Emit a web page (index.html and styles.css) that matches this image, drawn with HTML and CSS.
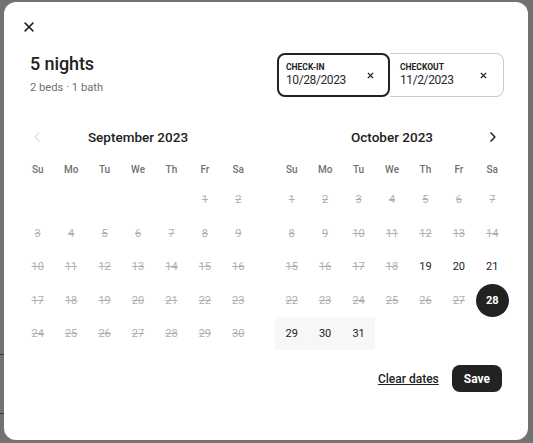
FILE: index.html
```html
<!DOCTYPE html>
<html lang="en">
<head>
<meta charset="utf-8">
<title>Select dates</title>
<link rel="stylesheet" href="styles.css">
</head>
<body>
<div class="modal">
  <div class="topbar">
    <button class="close" aria-label="Close">
      <svg viewBox="0 0 32 32" width="14" height="14"><path d="m6 6 20 20M26 6 6 26" fill="none" stroke="#222" stroke-width="3.4"/></svg>
    </button>
  </div>
  <div class="header">
    <div class="title-block">
      <h1 class="title">5 nights</h1>
      <div class="subtitle">2 beds · 1 bath</div>
    </div>
    <div class="dates">
      <div class="date-field selected">
        <div class="field-text">
          <div class="label">CHECK-IN</div>
          <div class="value">10/28/2023</div>
        </div>
        <svg class="field-x" viewBox="0 0 8 8" width="7" height="7"><path d="M1 1 7 7M7 1 1 7" fill="none" stroke="#222" stroke-width="1.6"/></svg>
      </div>
      <div class="date-field plain">
        <div class="field-text">
          <div class="label">CHECKOUT</div>
          <div class="value">11/2/2023</div>
        </div>
        <svg class="field-x" viewBox="0 0 8 8" width="7" height="7"><path d="M1 1 7 7M7 1 1 7" fill="none" stroke="#222" stroke-width="1.6"/></svg>
      </div>
    </div>
  </div>

  <div class="calendars">
    <div class="month">
      <div class="month-head">
        <span class="nav"><svg viewBox="0 0 32 32" width="12" height="12"><path d="M20 28 8.7 16.7a1 1 0 0 1 0-1.4L20 4" fill="none" stroke="#e2e2e2" stroke-width="4"/></svg></span>
        <span class="month-title">September 2023</span>
        <span class="nav"></span>
      </div>
      <div class="weekdays"><span>Su</span><span>Mo</span><span>Tu</span><span>We</span><span>Th</span><span>Fr</span><span>Sa</span></div>
      <div class="days">
        <span></span><span></span><span></span><span></span><span></span>
        <span class="day off">1</span><span class="day off">2</span>
        <span class="day off">3</span><span class="day off">4</span><span class="day off">5</span><span class="day off">6</span><span class="day off">7</span><span class="day off">8</span><span class="day off">9</span>
        <span class="day off">10</span><span class="day off">11</span><span class="day off">12</span><span class="day off">13</span><span class="day off">14</span><span class="day off">15</span><span class="day off">16</span>
        <span class="day off">17</span><span class="day off">18</span><span class="day off">19</span><span class="day off">20</span><span class="day off">21</span><span class="day off">22</span><span class="day off">23</span>
        <span class="day off">24</span><span class="day off">25</span><span class="day off">26</span><span class="day off">27</span><span class="day off">28</span><span class="day off">29</span><span class="day off">30</span>
      </div>
    </div>
    <div class="month">
      <div class="month-head">
        <span class="nav"></span>
        <span class="month-title">October 2023</span>
        <span class="nav"><svg viewBox="0 0 32 32" width="12" height="12"><path d="m12 4 11.3 11.3a1 1 0 0 1 0 1.4L12 28" fill="none" stroke="#222" stroke-width="4"/></svg></span>
      </div>
      <div class="weekdays"><span>Su</span><span>Mo</span><span>Tu</span><span>We</span><span>Th</span><span>Fr</span><span>Sa</span></div>
      <div class="days">
        <span class="day off">1</span><span class="day off">2</span><span class="day off">3</span><span class="day off">4</span><span class="day off">5</span><span class="day off">6</span><span class="day off">7</span>
        <span class="day off">8</span><span class="day off">9</span><span class="day off">10</span><span class="day off">11</span><span class="day off">12</span><span class="day off">13</span><span class="day off">14</span>
        <span class="day off">15</span><span class="day off">16</span><span class="day off">17</span><span class="day off">18</span><span class="day">19</span><span class="day">20</span><span class="day">21</span>
        <span class="day off">22</span><span class="day off">23</span><span class="day off">24</span><span class="day off">25</span><span class="day off">26</span><span class="day off">27</span><span class="day picked"><span class="dot">28</span></span>
        <span class="day range">29</span><span class="day range">30</span><span class="day range">31</span>
      </div>
    </div>
  </div>

  <div class="footer">
    <a class="clear" href="#">Clear dates</a>
    <button class="save">Save</button>
  </div>
</div>
</body>
</html>
```

FILE: styles.css
```css
* { box-sizing: border-box; }

html, body {
  margin: 0;
  padding: 0;
}

body {
  width: 533px;
  height: 443px;
  overflow: hidden;
  background-color: #727272;
  background-image:
    linear-gradient(#3c3c3c, #3c3c3c),
    linear-gradient(#3c3c3c, #3c3c3c);
  background-size: 4px 1px, 4px 1px;
  background-position: 0 354px, 0 413px;
  background-repeat: no-repeat;
  font-family: Roboto, "Liberation Sans", Arial, sans-serif;
  color: #222222;
  padding: 2px 0 0 4px;
}

.modal {
  width: 524px;
  height: 438px;
  background: #ffffff;
  border-radius: 12px;
  display: flex;
  flex-direction: column;
}

.topbar {
  height: 50px;
  display: flex;
  align-items: center;
  padding-left: 18px;
}

.close {
  border: none;
  background: none;
  padding: 0;
  margin: 0;
  width: 14px;
  height: 14px;
  display: flex;
}

.header {
  display: flex;
  justify-content: space-between;
  align-items: flex-start;
  padding: 0 24px 0 26px;
}

.title {
  margin: 0;
  font-size: 18px;
  line-height: 24px;
  font-weight: 500;
  letter-spacing: -0.1px;
}

.subtitle {
  margin-top: 4px;
  font-size: 11.2px;
  line-height: 16px;
  color: #717171;
}

.dates {
  display: flex;
  margin-top: 1px;
  height: 44px;
}

.date-field {
  display: flex;
  align-items: center;
  height: 44px;
}

.date-field.selected {
  width: 113px;
  border: 2px solid #222222;
  border-radius: 8px;
  padding: 0 14px 0 7px;
}

.date-field.plain {
  width: 114px;
  border: 1px solid #cccccc;
  border-left: none;
  border-radius: 0 8px 8px 0;
  padding: 0 16px 0 10px;
}

.field-text {
  flex: 1;
  align-self: flex-start;
  padding-top: 7px;
}

.plain .field-text {
  padding-top: 8px;
}

.label {
  font-size: 8.5px;
  line-height: 10px;
  font-weight: 700;
}

.value {
  font-size: 12px;
  line-height: 16px;
  letter-spacing: -0.4px;
  color: #2a2a2a;
}

.field-x {
  display: block;
}

.calendars {
  display: flex;
  gap: 20px;
  padding: 0 17px;
  margin-top: 23px;
}

.month {
  width: 234px;
}

.month-head {
  display: flex;
  align-items: center;
  height: 34px;
}

.nav {
  width: 33.43px;
  display: flex;
  justify-content: center;
  align-items: center;
}

.nav svg { display: block; }

.month-title {
  flex: 1;
  text-align: center;
  font-size: 13.5px;
  font-weight: 500;
}

.weekdays {
  display: grid;
  grid-template-columns: repeat(7, 1fr);
  margin-top: 6px;
  height: 20px;
  line-height: 20px;
  font-size: 10px;
  font-weight: 500;
  color: #717171;
  text-align: center;
}

.days {
  display: grid;
  grid-template-columns: repeat(7, 1fr);
  grid-auto-rows: 33.4px;
  margin-top: 3.3px;
}

.day {
  display: flex;
  align-items: center;
  justify-content: center;
  font-size: 11px;
  font-weight: 400;
  color: #222222;
}

.day.off {
  color: #b0b0b0;
  text-decoration: line-through;
}

.day.range {
  background: #f7f7f7;
}

.dot {
  width: 33px;
  height: 33px;
  border-radius: 50%;
  background: #222222;
  color: #ffffff;
  font-weight: 700;
  display: flex;
  align-items: center;
  justify-content: center;
}

.footer {
  display: flex;
  justify-content: flex-end;
  align-items: center;
  gap: 13px;
  margin-top: 15px;
  padding-right: 26px;
}

.clear {
  font-size: 12px;
  font-weight: 500;
  color: #222222;
  text-decoration: underline;
}

.save {
  height: 27px;
  padding: 0 12px;
  border: none;
  border-radius: 8px;
  background: #222222;
  color: #ffffff;
  font-family: Roboto, "Liberation Sans", Arial, sans-serif;
  font-size: 12px;
  font-weight: 700;
}
```
